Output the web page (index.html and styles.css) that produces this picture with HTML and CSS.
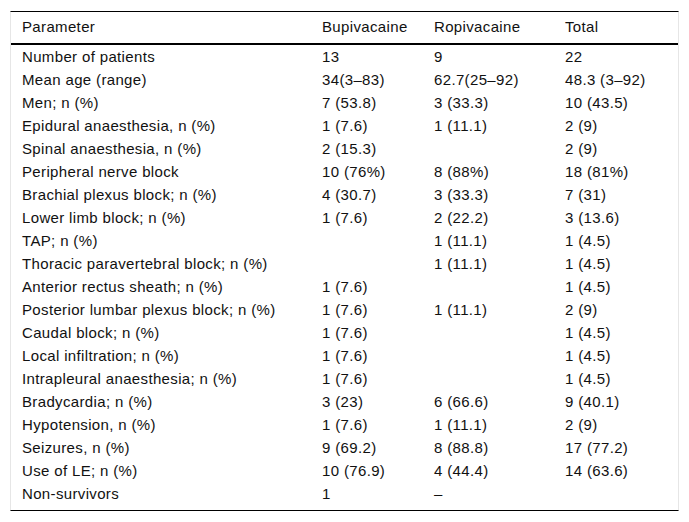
FILE: index.html
```html
<!DOCTYPE html>
<html lang="en">
<head>
<meta charset="utf-8">
<title>Table</title>
<link rel="stylesheet" href="styles.css">
</head>
<body>
<div class="table-wrap">
  <table class="data-table">
    <colgroup>
      <col class="col-param">
      <col class="col-bup">
      <col class="col-rop">
      <col class="col-total">
    </colgroup>
    <thead>
      <tr><th>Parameter</th><th>Bupivacaine</th><th>Ropivacaine</th><th>Total</th></tr>
    </thead>
    <tbody>
      <tr><td>Number of patients</td><td>13</td><td>9</td><td>22</td></tr>
      <tr><td>Mean age (range)</td><td>34(3–83)</td><td>62.7(25–92)</td><td>48.3 (3–92)</td></tr>
      <tr><td>Men; n (%)</td><td>7 (53.8)</td><td>3 (33.3)</td><td>10 (43.5)</td></tr>
      <tr><td>Epidural anaesthesia, n (%)</td><td>1 (7.6)</td><td>1 (11.1)</td><td>2 (9)</td></tr>
      <tr><td>Spinal anaesthesia, n (%)</td><td>2 (15.3)</td><td></td><td>2 (9)</td></tr>
      <tr><td>Peripheral nerve block</td><td>10 (76%)</td><td>8 (88%)</td><td>18 (81%)</td></tr>
      <tr><td>Brachial plexus block; n (%)</td><td>4 (30.7)</td><td>3 (33.3)</td><td>7 (31)</td></tr>
      <tr><td>Lower limb block; n (%)</td><td>1 (7.6)</td><td>2 (22.2)</td><td>3 (13.6)</td></tr>
      <tr><td>TAP; n (%)</td><td></td><td>1 (11.1)</td><td>1 (4.5)</td></tr>
      <tr><td>Thoracic paravertebral block; n (%)</td><td></td><td>1 (11.1)</td><td>1 (4.5)</td></tr>
      <tr><td>Anterior rectus sheath; n (%)</td><td>1 (7.6)</td><td></td><td>1 (4.5)</td></tr>
      <tr><td>Posterior lumbar plexus block; n (%)</td><td>1 (7.6)</td><td>1 (11.1)</td><td>2 (9)</td></tr>
      <tr><td>Caudal block; n (%)</td><td>1 (7.6)</td><td></td><td>1 (4.5)</td></tr>
      <tr><td>Local infiltration; n (%)</td><td>1 (7.6)</td><td></td><td>1 (4.5)</td></tr>
      <tr><td>Intrapleural anaesthesia; n (%)</td><td>1 (7.6)</td><td></td><td>1 (4.5)</td></tr>
      <tr><td>Bradycardia; n (%)</td><td>3 (23)</td><td>6 (66.6)</td><td>9 (40.1)</td></tr>
      <tr><td>Hypotension, n (%)</td><td>1 (7.6)</td><td>1 (11.1)</td><td>2 (9)</td></tr>
      <tr><td>Seizures, n (%)</td><td>9 (69.2)</td><td>8 (88.8)</td><td>17 (77.2)</td></tr>
      <tr><td>Use of LE; n (%)</td><td>10 (76.9)</td><td>4 (44.4)</td><td>14 (63.6)</td></tr>
      <tr><td>Non-survivors</td><td>1</td><td>–</td><td></td></tr>
    </tbody>
  </table>
</div>
</body>
</html>
```

FILE: styles.css
```css
html, body {
  margin: 0;
  padding: 0;
  background: #ffffff;
}

body {
  font-family: "Liberation Sans", Arial, sans-serif;
  font-size: 15px;
  color: #111111;
}

.table-wrap {
  margin: 11px 10px 0 10px;
  border-top: 1px solid #000;
  border-bottom: 1px solid #000;
  border-left: 1px solid #e6e6e6;
  border-right: 1px solid #e6e6e6;
  padding-bottom: 5px;
}

.data-table {
  width: 100%;
  border-collapse: collapse;
  table-layout: fixed;
  letter-spacing: 0.35px;
}

.col-param { width: 300px; }
.col-bup { width: 112px; }
.col-rop { width: 131px; }
.col-total { width: auto; }

.data-table th {
  font-weight: normal;
  text-align: left;
  line-height: 17px;
  padding: 6px 0 8px 11px;
  border-bottom: 2px solid #000;
  white-space: nowrap;
}

.data-table td {
  line-height: 17px;
  padding: 3px 0 3px 11px;
  white-space: nowrap;
  vertical-align: top;
}
```
